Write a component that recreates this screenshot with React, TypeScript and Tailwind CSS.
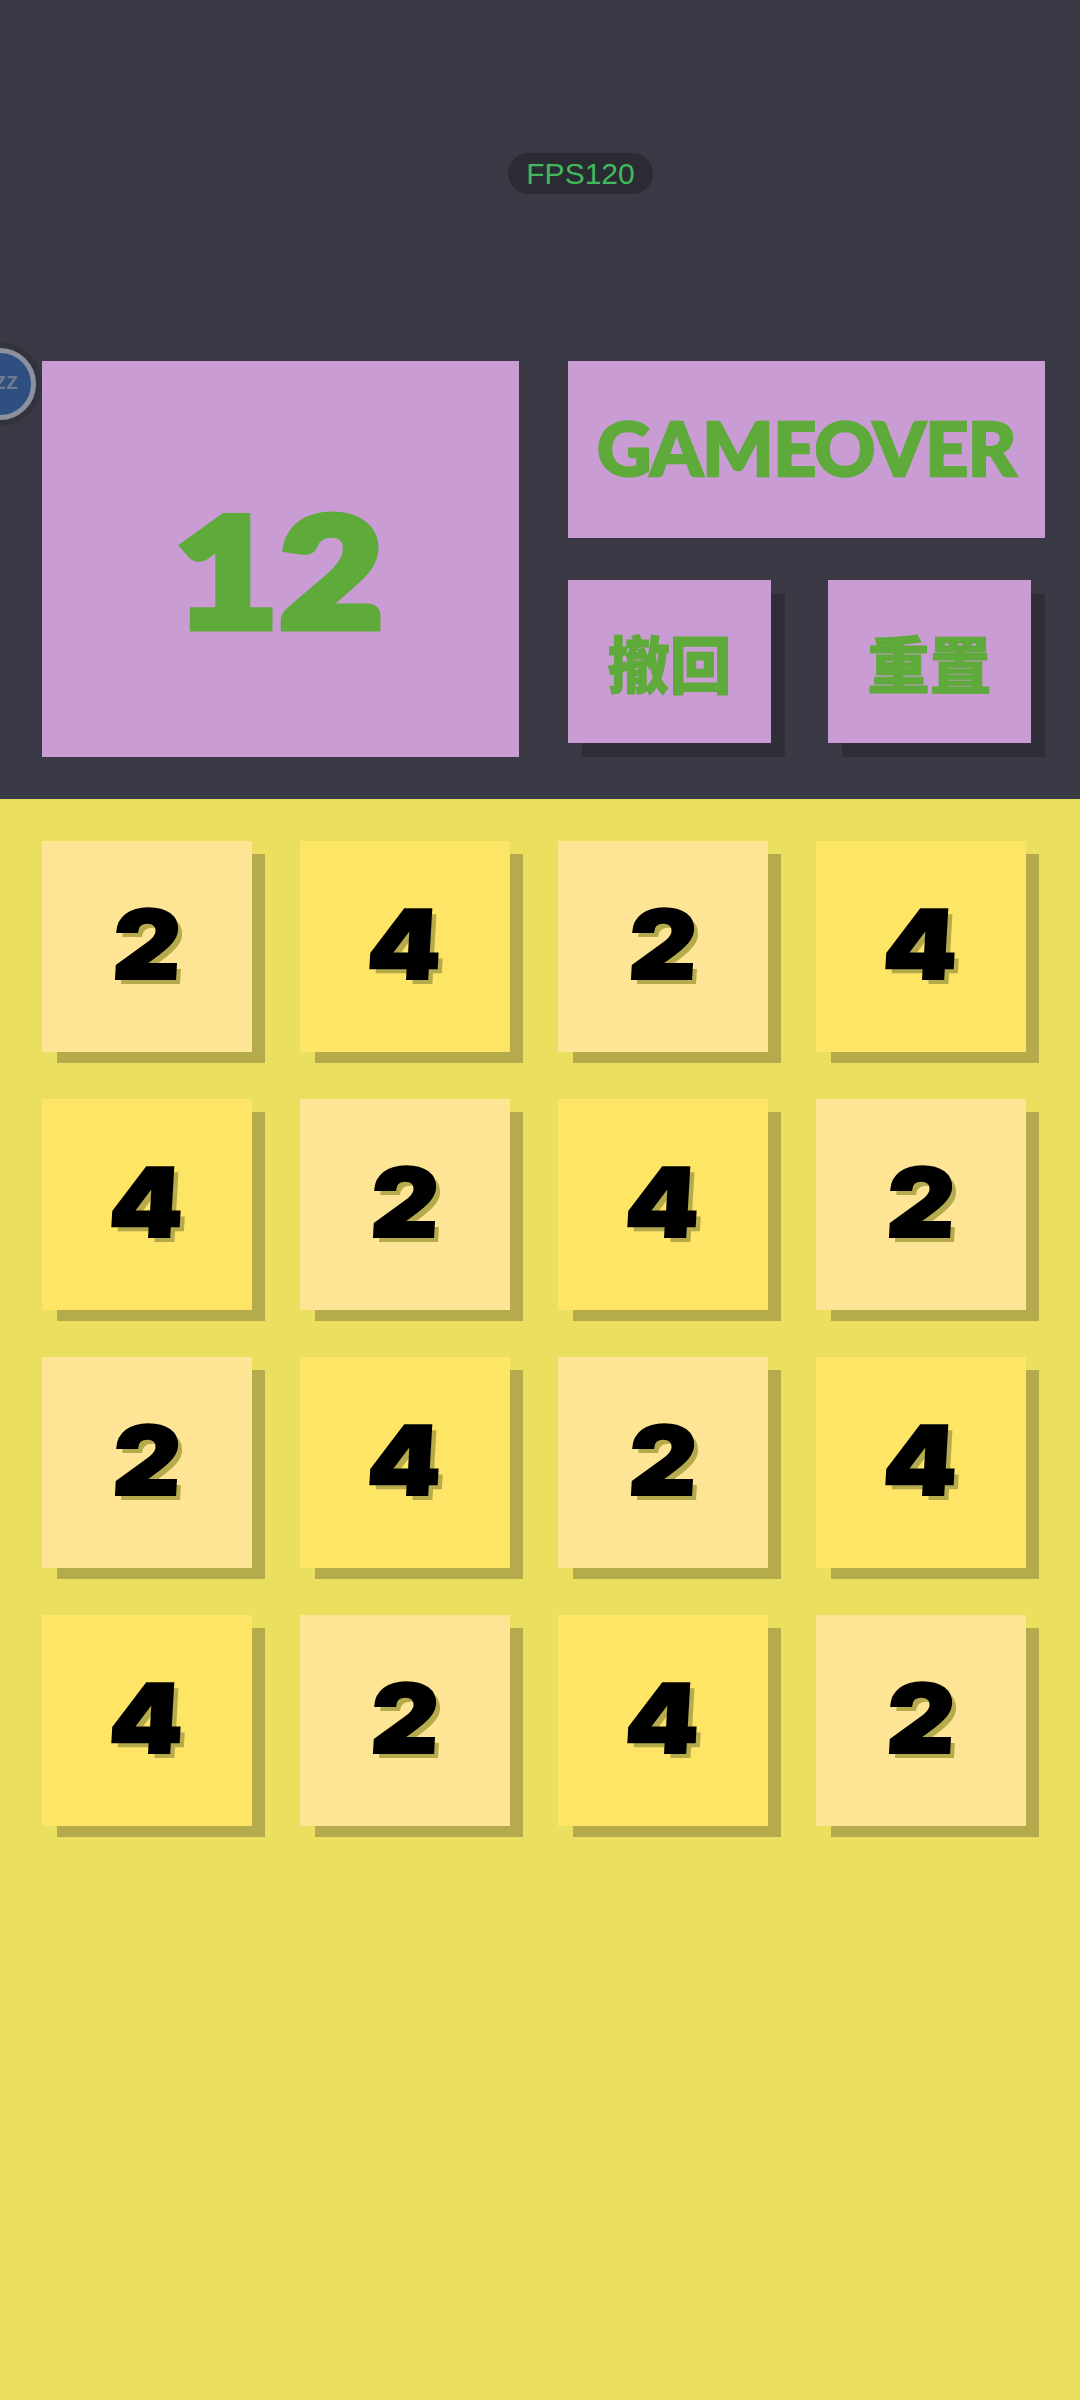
const tiles = [2, 4, 2, 4, 4, 2, 4, 2, 2, 4, 2, 4, 4, 2, 4, 2];

const Tile = ({ value }: { value: number }) => {
  return (
    <div
      className={`flex h-[211px] w-[210px] items-center justify-center pb-[6px] shadow-[14px_12px_0_-1px_#b5ab4c] ${
        value === 2 ? "bg-[#fee596]" : "bg-[#ffe566]"
      }`}
    >
      <span className="scale-x-110 -skew-x-3 font-['Inter',sans-serif] text-[96px] leading-none font-black text-black [-webkit-text-stroke:2px_#000] [text-shadow:5px_5px_0_#b5ab4c]">
        {value}
      </span>
    </div>
  );
};

const ActionButton = ({ label }: { label: string }) => {
  return (
    <button className="flex h-[163px] w-[203px] items-center justify-center bg-[#ca9cd4] font-['Noto_Sans_CJK_SC',sans-serif] text-[62px] leading-none font-black text-[#5eaa3a] shadow-[14px_14px_0_#2e2e38] [-webkit-text-stroke:1px_#5eaa3a]">
      {label}
    </button>
  );
};

export default function App() {
  return (
    <div className="relative h-[2400px] w-[1080px] overflow-hidden bg-[#ebdf5f]">
      <header className="flex h-[799px] gap-[49px] bg-[#3a3a46] pt-[361px] pl-[42px]">
        <div className="flex h-[396px] w-[477px] items-center justify-center bg-[#ca9cd4] pt-[20px] font-['Lato',sans-serif] leading-none font-black text-[#5eaa3a]">
          <span className="scale-x-[1.18] text-[150px] tracking-[2px] [-webkit-text-stroke:9px_#5eaa3a]">12</span>
        </div>
        <div className="flex w-[477px] flex-col gap-[42px]">
          <div className="flex h-[177px] items-center justify-center bg-[#ca9cd4] pb-[4px] font-['Lato',sans-serif] text-[75px] leading-none font-black tracking-[-0.5px] text-[#5eaa3a] [-webkit-text-stroke:2.5px_#5eaa3a]">
            GAMEOVER
          </div>
          <div className="flex justify-between pr-[14px]">
            <ActionButton label="撤回" />
            <ActionButton label="重置" />
          </div>
        </div>
      </header>

      <main className="grid grid-cols-[repeat(4,210px)] gap-x-[48px] gap-y-[47px] pt-[42px] pl-[42px]">
        {tiles.map((value, i) => (
          <Tile key={i} value={value} />
        ))}
      </main>

      {/* fps pill, floats over the header */}
      <div className="absolute top-[153px] left-[508px] flex h-[41px] w-[145px] items-center justify-center rounded-full bg-[#2b2b34] font-['Liberation_Sans',sans-serif] text-[30px] text-[#41b95a]">
        FPS120
      </div>

      {/* floating ball cut off by the left edge */}
      <div className="absolute top-[342px] -left-[42px] flex h-[84px] w-[84px] items-center justify-center rounded-full bg-[#33333e]">
        <div className="flex h-[72px] w-[72px] items-center justify-center rounded-full border-[5px] border-[#8c919e] bg-[#2f4f80] font-['Liberation_Mono',monospace] text-[20px] font-bold text-[#6f7c90]">
          ZZZ
        </div>
      </div>
    </div>
  );
}
